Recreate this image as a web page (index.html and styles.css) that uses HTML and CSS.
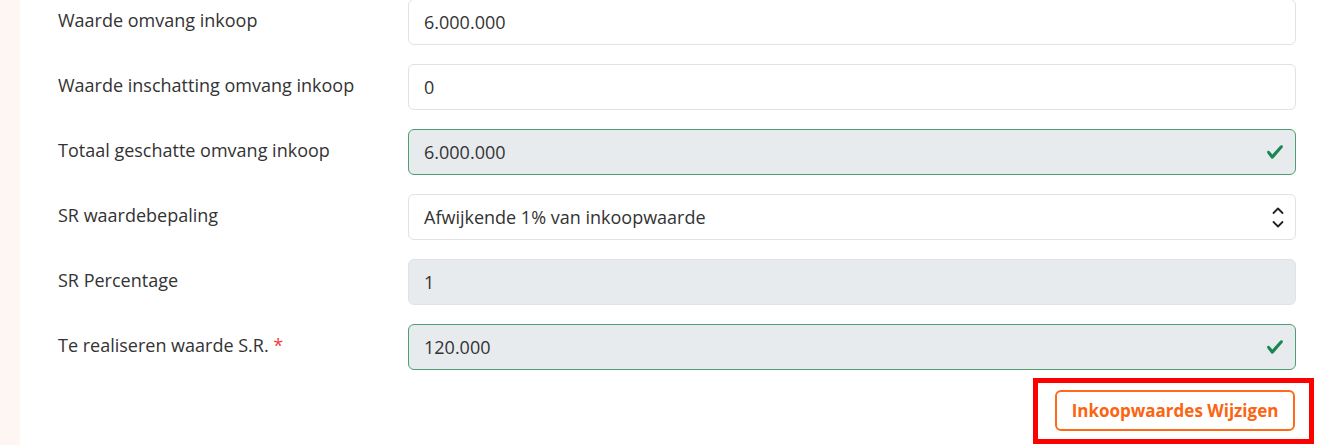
FILE: index.html
```html
<!DOCTYPE html>
<html lang="nl">
<head>
    <meta charset="UTF-8">
    <meta name="viewport" content="width=device-width, initial-scale=1.0">
    <title>Inkoopwaardes</title>
    <link rel="stylesheet" href="styles.css">
</head>
<body>
    <div class="page">
        <aside class="rail"></aside>
        <main class="content">
            <form class="form">
                <div class="row">
                    <label class="label">Waarde omvang inkoop</label>
                    <div class="field">
                        <input class="control" type="text" value="6.000.000">
                    </div>
                </div>

                <div class="row">
                    <label class="label">Waarde inschatting omvang inkoop</label>
                    <div class="field">
                        <input class="control" type="text" value="0">
                    </div>
                </div>

                <div class="row">
                    <label class="label">Totaal geschatte omvang inkoop</label>
                    <div class="field">
                        <input class="control is-readonly is-valid" type="text" value="6.000.000" readonly>
                        <svg class="field-icon check" viewBox="0 0 8 8"><path d="M2.3 6.73.6 4.53c-.4-1.04.46-1.4 1.1-.8l1.1 1.4 3.4-3.8c.6-.63 1.6-.27 1.2.7l-4 4.6c-.43.5-.8.4-1.1.1z"/></svg>
                    </div>
                </div>

                <div class="row">
                    <label class="label">SR waardebepaling</label>
                    <div class="field">
                        <div class="control select">Afwijkende 1% van inkoopwaarde</div>
                        <svg class="field-icon chevrons" viewBox="0 0 12 22"><path d="M1.5 7 6 2.5 10.5 7M1.5 16l4.5 4.5 4.5-4.5"/></svg>
                    </div>
                </div>

                <div class="row">
                    <label class="label">SR Percentage</label>
                    <div class="field">
                        <input class="control is-readonly" type="text" value="1" readonly>
                    </div>
                </div>

                <div class="row">
                    <label class="label">Te realiseren waarde S.R. <span class="required">*</span></label>
                    <div class="field">
                        <input class="control is-readonly is-valid" type="text" value="120.000" readonly>
                        <svg class="field-icon check" viewBox="0 0 8 8"><path d="M2.3 6.73.6 4.53c-.4-1.04.46-1.4 1.1-.8l1.1 1.4 3.4-3.8c.6-.63 1.6-.27 1.2.7l-4 4.6c-.43.5-.8.4-1.1.1z"/></svg>
                    </div>
                </div>

                <div class="actions">
                    <div class="highlight">
                        <button class="btn-outline" type="button">Inkoopwaardes Wijzigen</button>
                    </div>
                </div>
            </form>
        </main>
    </div>
</body>
</html>
```

FILE: styles.css
```css
* {
    margin: 0;
    padding: 0;
    box-sizing: border-box;
    font-family: "Open Sans", "Noto Sans", sans-serif;
}

body {
    background-color: #fff;
    color: #333;
    overflow: hidden;
}

.page {
    display: flex;
    min-height: 100vh;
}

.rail {
    width: 20px;
    flex-shrink: 0;
    background-color: #fdf6f3;
}

.content {
    flex: 1;
    padding-left: 38px;
}

.form {
    display: flex;
    flex-direction: column;
    gap: 19px;
    margin-top: -1px;
}

.row {
    display: grid;
    grid-template-columns: 350px 888px;
}

.label {
    font-size: 18px;
    line-height: 26px;
    padding-top: 8px;
    color: #333;
}

.required {
    color: #f0413a;
}

.field {
    position: relative;
}

.control {
    display: block;
    width: 100%;
    height: 46px;
    padding: 0 15px;
    font-size: 18px;
    line-height: 44px;
    color: #333;
    background-color: #fff;
    border: 1px solid #dfe2e6;
    border-radius: 6px;
    outline: none;
}

.is-readonly {
    background-color: #e8ebee;
}

.is-valid {
    border-color: #4c9f72;
    padding-right: 44px;
}

.field-icon {
    position: absolute;
    top: 50%;
}

.check {
    right: 12px;
    width: 18px;
    height: 18px;
    margin-top: -9px;
    fill: #198754;
}

.chevrons {
    right: 12px;
    width: 12px;
    height: 22px;
    margin-top: -11px;
    fill: none;
    stroke: #222;
    stroke-width: 1.8;
    stroke-linecap: round;
    stroke-linejoin: round;
}

.actions {
    display: flex;
    justify-content: flex-end;
    width: 1256px;
    margin-top: -11px;
}

.highlight {
    border: 5px solid #ff0000;
    padding: 7px 14px 8px 17px;
}

.btn-outline {
    width: 240px;
    height: 41px;
    border: 2px solid #ff6a1a;
    border-radius: 6px;
    background-color: #fff;
    color: #fb6411;
    font-size: 17px;
    font-weight: 700;
    cursor: pointer;
}
```
